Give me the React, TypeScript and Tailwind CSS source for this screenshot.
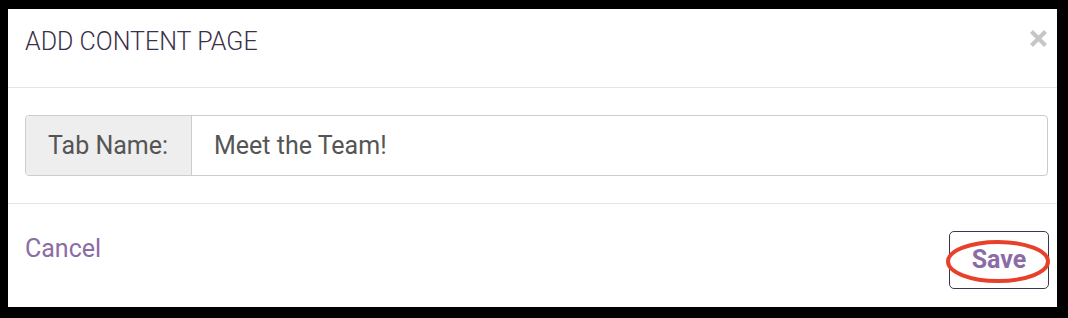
import React from "react";

export default function App() {
  return (
    <div
      className="w-[1068px] h-[318px] bg-black pt-[9px] pl-[8px] pr-[11px] pb-[11px] flex"
      style={{ fontFamily: "Roboto, 'Liberation Sans', sans-serif" }}
    >
      <div className="flex-1 bg-white flex flex-col">
        <div className="h-[79px] border-b border-[#e5e5e5] flex justify-between pt-[15px] pl-[17px] pr-[9px]">
          <h1 className="text-[25px] leading-[36px] font-light text-[#3b2f4a]">ADD CONTENT PAGE</h1>
          <svg width="19" height="19" viewBox="0 0 19 19" className="mt-[5px]">
            <path d="M2.5 2.5 L16.5 16.5 M16.5 2.5 L2.5 16.5" stroke="#c6c6c6" strokeWidth="4.2" />
          </svg>
        </div>
        <div className="h-[116px] border-b border-[#e5e5e5] pt-[27px] pl-[17px] pr-[9px]">
          <div className="flex h-[61px] border border-[#cccccc] rounded-[4px] overflow-hidden">
            <div className="w-[166px] bg-[#eeeeee] border-r border-[#cccccc] flex items-center pl-[22px] text-[25px] text-[#555555]">
              Tab Name:
            </div>
            <div className="flex-1 flex items-center pl-[22px] text-[25px] text-[#555555]">Meet the Team!</div>
          </div>
        </div>
        <div className="flex-1 flex justify-between items-start pt-[25px] pl-[17px] pr-[8px]">
          <span className="mt-[2px] text-[25px] leading-[36px] text-[#8b6ca6]">Cancel</span>
          <div className="relative mt-[2px] w-[100px] h-[58px] border border-[#3f3550] rounded-[5px] flex items-center justify-center">
            <span className="text-[25px] font-bold text-[#8b6ca6]">Save</span>
            <svg className="absolute left-0 top-0 overflow-visible" width="100" height="58">
              <ellipse cx="48" cy="29.5" rx="50" ry="19.5" fill="none" stroke="#e8412b" strokeWidth="4" />
            </svg>
          </div>
        </div>
      </div>
    </div>
  );
}
